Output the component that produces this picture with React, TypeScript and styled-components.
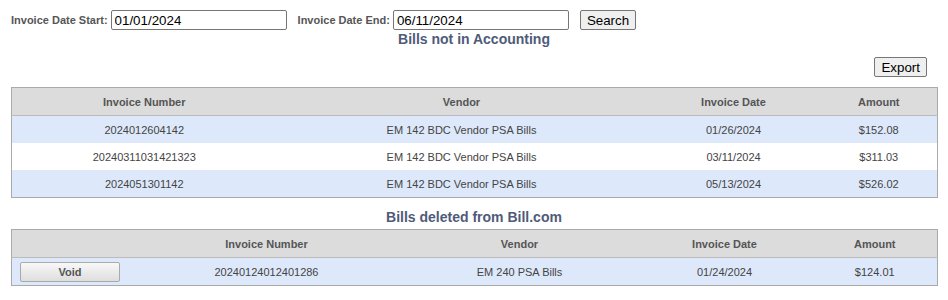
import React from "react";
import styled, { createGlobalStyle } from "styled-components";

const GlobalStyle = createGlobalStyle`
  body {
    margin: 0;
    background: #fff;
    font-family: "Liberation Sans", Arial, sans-serif;
  }
`;

const Page = styled.div`
  padding: 10px 11px;
  width: 926px;
`;

const FilterRow = styled.div`
  display: flex;
  align-items: center;
  height: 20px;
`;

const FilterLabel = styled.label`
  font-size: 11px;
  font-weight: bold;
  color: #555;
  margin-right: 3px;
`;

const DateInput = styled.input`
  box-sizing: border-box;
  width: 176px;
  height: 20px;
  padding: 0 3px;
  margin-right: 11px;
  border: 1px solid #767676;
  border-radius: 2px;
  font-family: "Liberation Sans", Arial, sans-serif;
  font-size: 13.33px;
  color: #000;
`;

const PlainButton = styled.button`
  box-sizing: border-box;
  height: 20px;
  padding: 0 6px;
  border: 1px solid #767676;
  border-radius: 2px;
  background: #efefef;
  font-family: "Liberation Sans", Arial, sans-serif;
  font-size: 13.33px;
  color: #000;
`;

const SectionTitle = styled.div`
  text-align: center;
  font-size: 14px;
  font-weight: bold;
  color: #4f5b79;
  line-height: 18px;
`;

const ExportRow = styled.div`
  display: flex;
  justify-content: flex-end;
  padding-right: 10px;
  margin: 9px 0 10px;
`;

const Table = styled.table`
  width: 926px;
  border-collapse: collapse;
  border: 1px solid #aaa;
  table-layout: fixed;
  font-size: 11px;
`;

const HeadCell = styled.th`
  background: #dcdcdc;
  color: #555;
  font-weight: bold;
  height: 27px;
  padding: 0;
  border-bottom: 1px solid #bbb;
  text-align: center;
`;

const Row = styled.tr<{ $alt?: boolean }>`
  background: ${(p) => (p.$alt ? "#fff" : "#dde9fb")};
`;

const Cell = styled.td<{ $left?: boolean }>`
  height: 27px;
  padding: 0 ${(p) => (p.$left ? "8px" : "0")};
  color: #444;
  text-align: ${(p) => (p.$left ? "left" : "center")};
`;

const VoidButton = styled.button`
  box-sizing: border-box;
  width: 100px;
  height: 20px;
  border: 1px solid #aaa;
  border-radius: 2px;
  background: linear-gradient(#f8f8f8, #dedede);
  font-family: "Liberation Sans", Arial, sans-serif;
  font-size: 11px;
  font-weight: bold;
  color: #555;
  display: block;
`;

const SecondTitle = styled(SectionTitle)`
  margin: 10px 0 3px;
`;

const pending = [
  ["2024012604142", "EM 142 BDC Vendor PSA Bills", "01/26/2024", "$152.08"],
  ["20240311031421323", "EM 142 BDC Vendor PSA Bills", "03/11/2024", "$311.03"],
  ["2024051301142", "EM 142 BDC Vendor PSA Bills", "05/13/2024", "$526.02"],
];

const deleted = [["20240124012401286", "EM 240 PSA Bills", "01/24/2024", "$124.01"]];

export default function App() {
  return (
    <Page>
      <GlobalStyle />
      <FilterRow>
        <FilterLabel>Invoice Date Start:</FilterLabel>
        <DateInput defaultValue="01/01/2024" />
        <FilterLabel>Invoice Date End:</FilterLabel>
        <DateInput defaultValue="06/11/2024" />
        <PlainButton>Search</PlainButton>
      </FilterRow>
      <SectionTitle>Bills not in Accounting</SectionTitle>
      <ExportRow>
        <PlainButton>Export</PlainButton>
      </ExportRow>
      <Table>
        <colgroup>
          <col style={{ width: 265 }} />
          <col style={{ width: 370 }} />
          <col style={{ width: 174 }} />
          <col style={{ width: 117 }} />
        </colgroup>
        <thead>
          <tr>
            <HeadCell>Invoice Number</HeadCell>
            <HeadCell>Vendor</HeadCell>
            <HeadCell>Invoice Date</HeadCell>
            <HeadCell>Amount</HeadCell>
          </tr>
        </thead>
        <tbody>
          {pending.map((r, i) => (
            <Row key={r[0]} $alt={i % 2 === 1}>
              {r.map((c) => (
                <Cell key={c}>{c}</Cell>
              ))}
            </Row>
          ))}
        </tbody>
      </Table>
      <SecondTitle>Bills deleted from Bill.com</SecondTitle>
      <Table>
        <colgroup>
          <col style={{ width: 119 }} />
          <col style={{ width: 272 }} />
          <col style={{ width: 234 }} />
          <col style={{ width: 176 }} />
          <col style={{ width: 125 }} />
        </colgroup>
        <thead>
          <tr>
            <HeadCell />
            <HeadCell>Invoice Number</HeadCell>
            <HeadCell>Vendor</HeadCell>
            <HeadCell>Invoice Date</HeadCell>
            <HeadCell>Amount</HeadCell>
          </tr>
        </thead>
        <tbody>
          {deleted.map((r) => (
            <Row key={r[0]}>
              <Cell $left>
                <VoidButton>Void</VoidButton>
              </Cell>
              {r.map((c) => (
                <Cell key={c}>{c}</Cell>
              ))}
            </Row>
          ))}
        </tbody>
      </Table>
    </Page>
  );
}
